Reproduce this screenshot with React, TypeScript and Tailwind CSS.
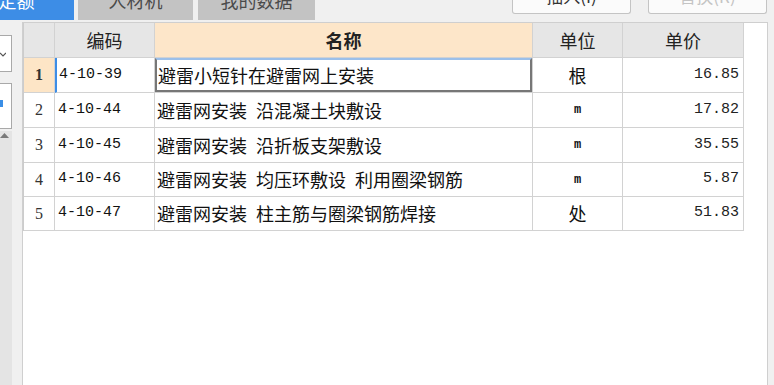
import React from "react";

const cjk = "font-['Noto_Sans_CJK_SC',sans-serif]";
const mono = "font-['Liberation_Mono','Noto_Sans_CJK_SC',monospace]";

const rows = [
  { no: "1", code: "4-10-39", name: "避雷小短针在避雷网上安装", unit: "根", price: "16.85", h: "h-[35px]" },
  { no: "2", code: "4-10-44", name: "避雷网安装\u2002沿混凝土块敷设", unit: "m", price: "17.82", h: "h-[35px]" },
  { no: "3", code: "4-10-45", name: "避雷网安装\u2002沿折板支架敷设", unit: "m", price: "35.55", h: "h-[35px]" },
  { no: "4", code: "4-10-46", name: "避雷网安装\u2002均压环敷设\u2002利用圈梁钢筋", unit: "m", price: "5.87", h: "h-[34px]" },
  { no: "5", code: "4-10-47", name: "避雷网安装\u2002柱主筋与圈梁钢筋焊接", unit: "处", price: "51.83", h: "h-[34px]" },
];

function Tab({ label, active, w }: { label: string; active?: boolean; w: string }) {
  return (
    <div
      className={`${w} h-[20px] overflow-hidden flex justify-center items-start ${
        active ? "bg-[#3d8de6] text-white -ml-[41px]" : "bg-[#c3c3c3] text-[#4a4a4a]"
      }`}
    >
      <span className={`${cjk} text-[18px] leading-[18px] -mt-[9px]`}>{label}</span>
    </div>
  );
}

function TopButton({ label, disabled }: { label: string; disabled?: boolean }) {
  return (
    <div className="w-[119px] h-[14px] overflow-hidden flex justify-center items-start bg-[#fbfbfb] border-x border-b border-[#c4c4c4] rounded-b-[3px]">
      <span
        className={`${cjk} text-[17px] leading-[18px] -mt-[13px] ${disabled ? "text-[#c4c4c4]" : "text-[#333]"}`}
      >
        {label}
      </span>
    </div>
  );
}

const cell = "border-r border-b border-[#d2d2d2] flex items-center";

export default function App() {
  return (
    <div className="w-[774px] h-[385px] bg-[#f0f0f0] overflow-hidden flex flex-col">
      {/* tab strip + buttons */}
      <div className="h-[22px] flex items-start">
        <div className="flex">
          <Tab label="定额" active w="w-[115px]" />
          <div className="ml-[4px]">
            <Tab label="人材机" w="w-[115px]" />
          </div>
          <div className="ml-[5px]">
            <Tab label="我的数据" w="w-[117px]" />
          </div>
        </div>
        <div className="ml-auto mr-[7px] flex gap-[17px]">
          <TopButton label="插入(I)" />
          <TopButton label="替换(R)" disabled />
        </div>
      </div>

      <div className="flex flex-1 min-h-0">
        {/* left side strip */}
        <div className="w-[22px] flex flex-col">
          <div className="mt-[13px] w-[12px] h-[37px] bg-white border-y border-r border-[#a9a9a9] flex items-center">
            <svg width="6" height="5" viewBox="0 0 6 5" className="mt-[2px]">
              <path d="M0 1 L3 4 L6 1" fill="none" stroke="#555" strokeWidth="1.2" />
            </svg>
          </div>
          <div className="mt-[11px] w-[12px] h-[46px] bg-white border-y border-r border-[#a9a9a9] flex items-center">
            <div className="w-[3px] h-[7px] bg-[#3a8ee6] -mt-[6px]" />
          </div>
          <div className="mt-[2px] w-[12px] flex-1 bg-[#e4e4e4] pt-[2px]">
            <svg width="9" height="5" viewBox="0 0 9 5">
              <path d="M0 5 L4.5 0 L9 5 Z" fill="#7a7a7a" />
            </svg>
          </div>
        </div>

        {/* main panel */}
        <div className="w-[746px] bg-white border-l border-t border-r border-[#cfcfcf] flex flex-col">
          <div className="w-[720px] border-l border-[#cccccc] grid grid-cols-[31px_100px_378px_90px_121px]">
            {/* header */}
            <div className={`${cell} h-[35px] bg-[#e6e6e6]`} />
            <div className={`${cell} h-[35px] bg-[#e6e6e6] justify-center ${cjk} text-[18px] text-[#222]`}>编码</div>
            <div className={`${cell} h-[35px] bg-[#fde6c9] justify-center ${cjk} text-[18px] font-bold text-[#222]`}>名称</div>
            <div className={`${cell} h-[35px] bg-[#e6e6e6] justify-center ${cjk} text-[18px] text-[#222]`}>单位</div>
            <div className={`${cell} h-[35px] bg-[#e6e6e6] justify-center ${cjk} text-[18px] text-[#222]`}>单价</div>

            {rows.map((r, i) => {
              const first = i === 0;
              return (
                <React.Fragment key={r.no}>
                  <div
                    className={`${cell} ${r.h} justify-center font-['Liberation_Serif',serif] text-[16px] text-[#333] ${
                      first ? "bg-[#fde5c6] font-bold text-[#111]" : "bg-white"
                    }`}
                  >
                    {r.no}
                  </div>
                  <div
                    className={`${cell} ${r.h} ${mono} text-[15px] text-[#111] ${
                      first ? "border-l-2 border-l-[#3d8de6] pl-[2px]" : "pl-[3px]"
                    }`}
                  >
                    {r.code}
                  </div>
                  <div className={`${cell} ${r.h}`}>
                    <div
                      className={`w-full h-full flex items-center ${cjk} text-[18px] text-[#111] ${
                        first
                          ? "border-2 border-[#777] border-t-[#9cc0ea] pl-[1px]"
                          : "pl-[2px]"
                      }`}
                    >
                      {r.name}
                    </div>
                  </div>
                  <div
                    className={`${cell} ${r.h} justify-center text-[#111] ${
                      r.unit === "m" ? `${mono} text-[12px] font-bold` : `${cjk} text-[18px]`
                    }`}
                  >
                    {r.unit}
                  </div>
                  <div className={`${cell} ${r.h} justify-end pr-[4px] ${mono} text-[15px] text-[#222]`}>
                    {r.price}
                  </div>
                </React.Fragment>
              );
            })}
          </div>
        </div>
      </div>
    </div>
  );
}
